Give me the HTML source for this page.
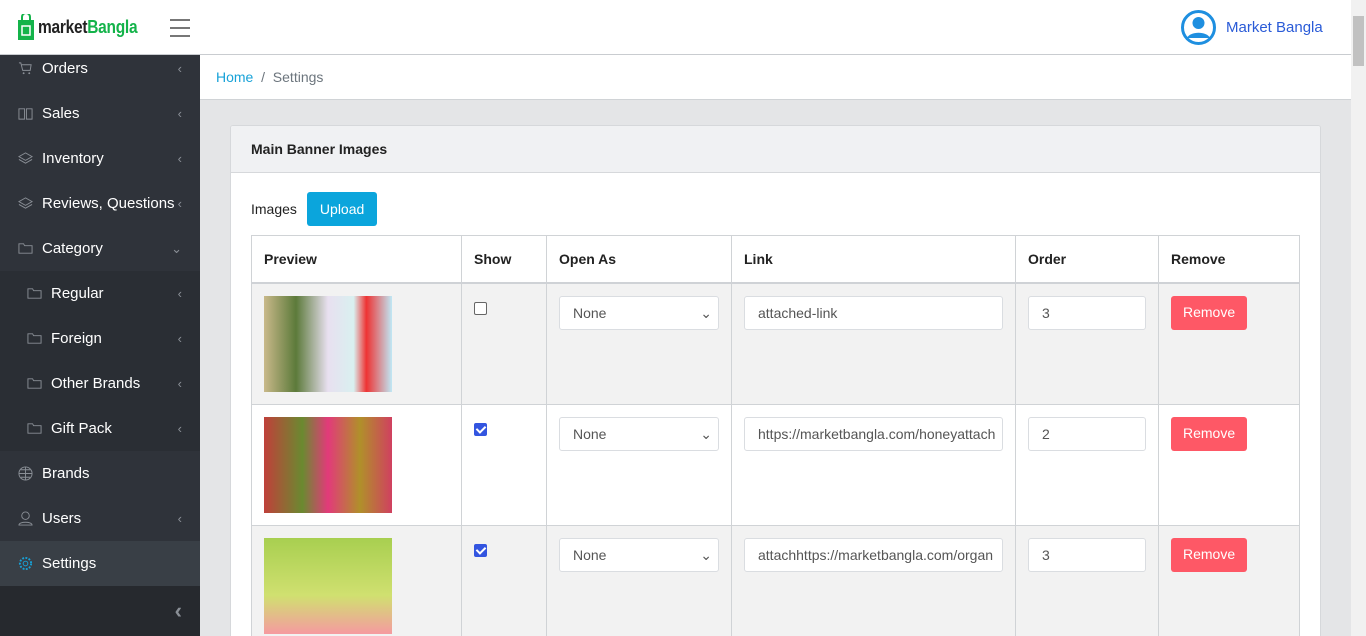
<!DOCTYPE html>
<html style="overflow:hidden;height:636px"><head><style>
*{box-sizing:border-box;margin:0;padding:0}
body{width:1366px;height:636px;overflow:hidden;font-family:"Liberation Sans",sans-serif;font-size:15px;background:#e4e5e7;position:relative}
.hdr{position:absolute;left:0;top:0;width:1351px;height:55px;background:#fff;border-bottom:1px solid #c9ccd0}
.logo{position:absolute;left:18px;top:14px;display:flex;align-items:center}
.logo .t{font-size:18px;font-weight:bold;transform:scaleX(0.86);transform-origin:left;letter-spacing:-0.3px;margin-left:4px;white-space:nowrap}
.burger{position:absolute;left:170px;top:19px;width:20px}
.burger i{display:block;height:2px;background:#777;margin-bottom:6px}
.user{position:absolute;left:1181px;top:10px;display:flex;align-items:center;color:#2a5bd7;font-size:15px}
.side{position:absolute;left:0;top:55px;width:200px;height:581px;background:#2f333a;overflow:hidden}
.it{height:45px;display:flex;align-items:center;color:#fff;font-size:15px;padding-left:18px;position:relative}
.it svg{width:15px;height:15px;margin-right:9px}
.it .ch{position:absolute;right:18px;color:#8a8f96;font-size:13px}
.sub{background:#2a2e34}
.sub .it{padding-left:27px}
.bot{position:absolute;left:0;bottom:0;width:200px;height:50px;background:#26292e}
.crumb{position:absolute;left:200px;top:55px;width:1151px;height:45px;background:#fff;border-bottom:1px solid #d0d3d6;padding:14px 16px;font-size:14px;color:#6c757d}
.crumb a{color:#17a2d8;text-decoration:none}
.card{position:absolute;left:230px;top:125px;width:1091px;height:511px;background:#fff;border:1px solid #d6d8db;border-bottom:none;border-radius:3px 3px 0 0;overflow:hidden}
.ch2{height:47px;background:#f0f1f3;border-bottom:1px solid #d6d8db;padding:15px 20px;font-weight:bold;font-size:14px;color:#222}
.up{position:absolute;left:20px;top:66px;display:flex;align-items:center;font-size:14px;color:#222}
.up span{background:#0ba5dc;color:#fff;padding:9px 13px;border-radius:3px;margin-left:10px}
table{position:absolute;left:20px;top:109px;width:1049px;border-collapse:collapse;font-size:14px;table-layout:fixed}
th{text-align:left;height:47px;padding:0 12px;border:1px solid #d0d3d6;border-bottom:2px solid #cfd2d6;color:#222}
td{border:1px solid #d0d3d6;vertical-align:top;height:121px;padding:12px;background:#f2f2f2}
tr.w td{background:#fff}
.inp{height:34px;background:#fff;border:1px solid #dadde1;border-radius:3px;padding:0 13px;line-height:32px;color:#555;font-size:14px;white-space:nowrap;overflow:hidden;position:relative}
.rm{display:inline-block;background:#fe5866;color:#fff;padding:8px 12px;border-radius:3px;font-size:14px;height:34px}
.img{width:128px;height:96px}
.cb{width:13px;height:13px;border:1px solid #666;border-radius:2px;margin:6px 0 0 0;background:#fff}
.cb.on{background:#3355e0;border-color:#3355e0;position:relative}
.cb.on:after{content:"";position:absolute;left:3px;top:0px;width:4px;height:7px;border:solid #fff;border-width:0 2px 2px 0;transform:rotate(45deg)}
.scr{position:absolute;right:0;top:0;width:15px;height:636px;background:#f1f1f1}
.scr i{position:absolute;left:2px;top:16px;width:11px;height:50px;background:#c1c1c1}
</style></head><body>
<div class="hdr">
 <div class="logo"><svg width="16" height="26" viewBox="0 0 16 26"><path d="M4 6V3a4 4 0 0 1 8 0v3" stroke="#14b34a" stroke-width="2" fill="none"/><rect x="0" y="6" width="16" height="20" fill="#14b34a"/><path d="M4 12h8v9H4z" fill="none" stroke="#fff" stroke-width="1.5"/></svg><span class="t"><span style="color:#222">market</span><span style="color:#14b34a">Bangla</span></span></div>
 <div class="burger"><i></i><i></i><i></i></div>
 <div class="user"><svg width="35" height="35" viewBox="0 0 35 35"><circle cx="17.5" cy="17.5" r="16" fill="none" stroke="#1e8fe0" stroke-width="3"/><circle cx="17.5" cy="13" r="6" fill="#1e8fe0"/><path d="M6 28c3-7 20-7 23 0" fill="#1e8fe0"/></svg><span style="margin-left:10px">Market Bangla</span></div>
</div>
<div class="side">
 <div class="it" style="height:27px"><svg viewBox="0 0 16 16"><path d="M1 2h2l2 8h8l1-6H4" stroke="#8a8f96" fill="none"/><circle cx="6" cy="13" r="1" fill="#8a8f96"/><circle cx="12" cy="13" r="1" fill="#8a8f96"/></svg>Orders<span class="ch">‹</span></div>
 <div class="it" style="margin-top:9px"><svg viewBox="0 0 16 16"><path d="M1 3h6v11H1zM9 3h6v11H9z" stroke="#8a8f96" fill="none"/></svg>Sales<span class="ch">‹</span></div>
 <div class="it"><svg viewBox="0 0 16 16"><path d="M8 2l7 4-7 4-7-4zM1 9l7 4 7-4" stroke="#8a8f96" fill="none"/></svg>Inventory<span class="ch">‹</span></div>
 <div class="it"><svg viewBox="0 0 16 16"><path d="M8 2l7 4-7 4-7-4zM1 9l7 4 7-4" stroke="#8a8f96" fill="none"/></svg>Reviews, Questions<span class="ch">‹</span></div>
 <div class="it"><svg viewBox="0 0 16 16"><path d="M1 3h5l1 2h8v8H1z" stroke="#8a8f96" fill="none"/></svg>Category<span class="ch">⌄</span></div>
 <div class="sub">
 <div class="it"><svg viewBox="0 0 16 16"><path d="M1 3h5l1 2h8v8H1z" stroke="#8a8f96" fill="none"/></svg>Regular<span class="ch">‹</span></div>
 <div class="it"><svg viewBox="0 0 16 16"><path d="M1 3h5l1 2h8v8H1z" stroke="#8a8f96" fill="none"/></svg>Foreign<span class="ch">‹</span></div>
 <div class="it"><svg viewBox="0 0 16 16"><path d="M1 3h5l1 2h8v8H1z" stroke="#8a8f96" fill="none"/></svg>Other Brands<span class="ch">‹</span></div>
 <div class="it"><svg viewBox="0 0 16 16"><path d="M1 3h5l1 2h8v8H1z" stroke="#8a8f96" fill="none"/></svg>Gift Pack<span class="ch">‹</span></div>
 </div>
 <div class="it"><svg viewBox="0 0 16 16"><circle cx="8" cy="8" r="7" stroke="#8a8f96" fill="none"/><path d="M1 8h14M8 1v14M3 4h10M3 12h10" stroke="#8a8f96" fill="none"/></svg>Brands</div>
 <div class="it"><svg viewBox="0 0 16 16"><circle cx="8" cy="5" r="4" stroke="#8a8f96" fill="none"/><path d="M1 15c0-4 14-4 14 0z" stroke="#8a8f96" fill="none"/></svg>Users<span class="ch">‹</span></div>
 <div class="it" style="background:#393f46"><svg viewBox="0 0 16 16"><circle cx="8" cy="8" r="6" stroke="#17a2d8" stroke-width="2" stroke-dasharray="2 1.5" fill="none"/><circle cx="8" cy="8" r="2.5" stroke="#17a2d8" fill="none"/></svg>Settings</div>
 <div class="bot"><span style="position:absolute;right:18px;top:12px;color:#8a8f96;font-size:22px;font-weight:bold">‹</span></div>
</div>
<div class="crumb"><a>Home</a> &nbsp;/&nbsp; Settings</div>
<div class="card">
 <div class="ch2">Main Banner Images</div>
 <div class="up">Images<span>Upload</span></div>
 <table>
 <colgroup><col style="width:210px"><col style="width:85px"><col style="width:185px"><col style="width:284px"><col style="width:143px"><col></colgroup>
 <tr><th>Preview</th><th>Show</th><th>Open As</th><th>Link</th><th>Order</th><th>Remove</th></tr>
 <tr><td><div class="img" style="background:linear-gradient(90deg,#c9b98a 0,#5c7a3a 25%,#e8e0f0 50%,#d9f0f0 70%,#e33 80%,#bfe8f5 100%)"></div></td><td><div class="cb"></div></td><td><div class="inp">None<span style="position:absolute;right:6px">⌄</span></div></td><td><div class="inp">attached-link</div></td><td><div class="inp">3</div></td><td><span class="rm">Remove</span></td></tr>
 <tr class="w"><td><div class="img" style="background:linear-gradient(90deg,#c0403a,#6a8a30 30%,#e23a7a 50%,#b0902a 75%,#d04060)"></div></td><td><div class="cb on"></div></td><td><div class="inp">None<span style="position:absolute;right:6px">⌄</span></div></td><td><div class="inp">https://marketbangla.com/honeyattach</div></td><td><div class="inp">2</div></td><td><span class="rm">Remove</span></td></tr>
 <tr><td><div class="img" style="background:linear-gradient(180deg,#a8cf50,#d0e070 60%,#f59aa0)"></div></td><td><div class="cb on"></div></td><td><div class="inp">None<span style="position:absolute;right:6px">⌄</span></div></td><td><div class="inp">attachhttps://marketbangla.com/organ</div></td><td><div class="inp">3</div></td><td><span class="rm">Remove</span></td></tr>
 </table>
</div>
<div class="scr"><i></i></div>
</body></html>
